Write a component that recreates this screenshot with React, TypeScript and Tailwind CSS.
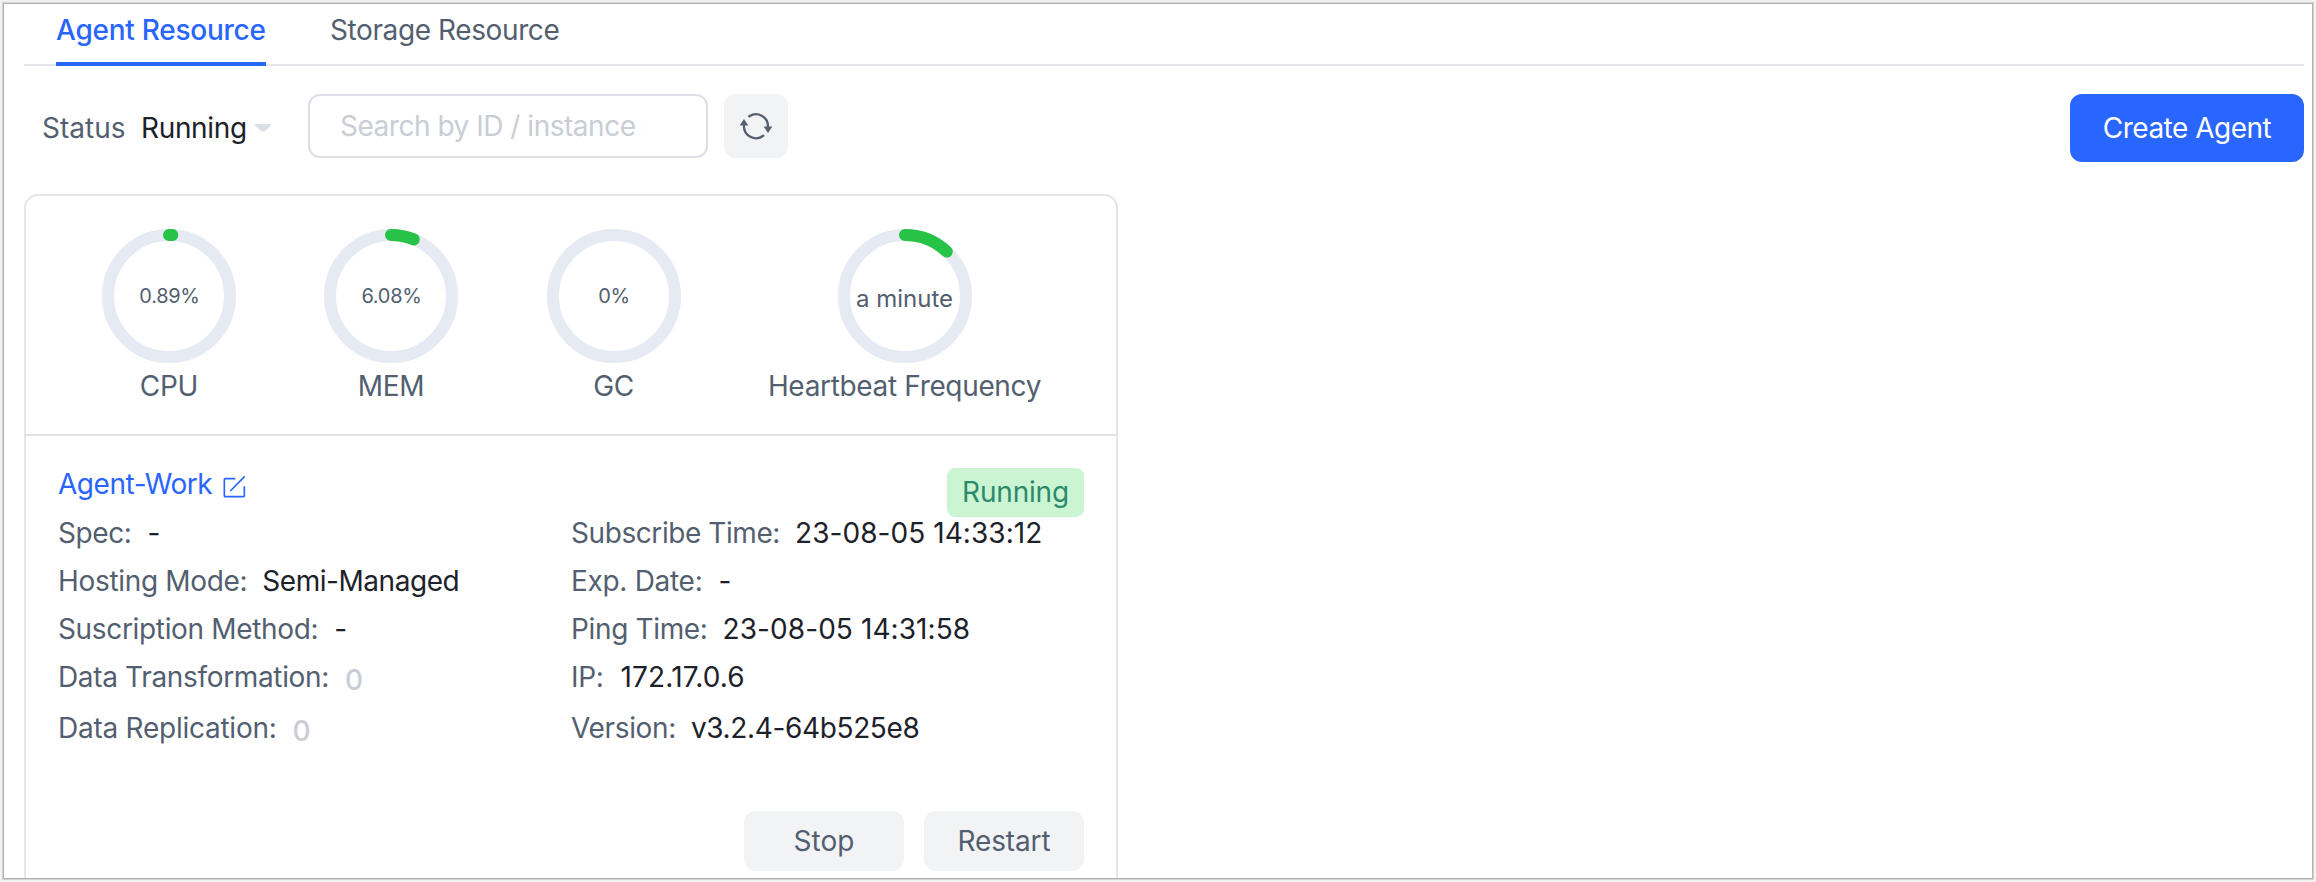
type Gauge = { label: string; value: string; percent: number; valueClass: string; labelClass: string }

const gauges: Gauge[] = [
  { label: 'CPU', value: '0.89%', percent: 0.89, valueClass: 'text-[20px] tracking-[-0.3px] pl-px', labelClass: 'tracking-[-0.3px]' },
  { label: 'MEM', value: '6.08%', percent: 6.08, valueClass: 'text-[20px] tracking-[-0.3px] pl-px', labelClass: 'tracking-[-0.3px]' },
  { label: 'GC', value: '0%', percent: 0, valueClass: 'text-[20px] tracking-[-0.3px] pl-px', labelClass: 'tracking-[-0.3px]' },
  { label: 'Heartbeat Frequency', value: 'a minute', percent: 12, valueClass: 'text-[24px] pt-1.5', labelClass: 'tracking-[-0.34px]' },
]

type Field = { label: string; value: string; labelClass: string; valueClass: string; muted?: boolean }

const leftFields: Field[] = [
  { label: 'Spec:', value: '-', labelClass: 'tracking-[-0.4px]', valueClass: 'pl-px' },
  { label: 'Hosting Mode:', value: 'Semi-Managed', labelClass: 'tracking-[-0.33px]', valueClass: 'tracking-[-0.45px]' },
  { label: 'Suscription Method:', value: '-', labelClass: 'tracking-[-0.34px]', valueClass: 'pl-px' },
  { label: 'Data Transformation:', value: '0', labelClass: 'tracking-[-0.34px]', valueClass: 'pl-px', muted: true },
  { label: 'Data Replication:', value: '0', labelClass: 'tracking-[-0.25px]', valueClass: 'pl-px', muted: true },
]

const rightFields: Field[] = [
  { label: 'Subscribe Time:', value: '23-08-05 14:33:12', labelClass: 'tracking-[-0.42px]', valueClass: 'tracking-[0.06px]' },
  { label: 'Exp. Date:', value: '-', labelClass: 'tracking-[-0.3px]', valueClass: 'pl-px' },
  { label: 'Ping Time:', value: '23-08-05 14:31:58', labelClass: 'tracking-[-0.35px]', valueClass: 'tracking-[0.08px]' },
  { label: 'IP:', value: '172.17.0.6', labelClass: 'tracking-[-0.3px]', valueClass: 'pl-[2px] tracking-[0.15px]' },
  { label: 'Version:', value: 'v3.2.4-64b525e8', labelClass: 'tracking-[-0.35px]', valueClass: 'tracking-[-0.36px]' },
]

const CIRCUMFERENCE = 2 * Math.PI * 61

function Ring({ gauge }: { gauge: Gauge }) {
  return (
    <div className="flex flex-col items-center">
      <div className="relative size-[134px]">
        <svg viewBox="0 0 134 134" className="size-full" fill="none" strokeWidth="12">
          <circle cx="67" cy="67" r="61" stroke="#e5eaf3" />
          {gauge.percent > 0 && (
            <circle
              cx="67"
              cy="67"
              r="61"
              stroke="#27c346"
              strokeLinecap="round"
              strokeDasharray={`${(CIRCUMFERENCE * gauge.percent) / 100} ${CIRCUMFERENCE}`}
              transform="rotate(-90 67 67)"
            />
          )}
        </svg>
        <span className={`absolute inset-0 flex items-center justify-center whitespace-nowrap ${gauge.valueClass}`}>{gauge.value}</span>
      </div>
      <span className={`leading-[46px] ${gauge.labelClass}`}>{gauge.label}</span>
    </div>
  )
}

function FieldList({ fields }: { fields: Field[] }) {
  return (
    <dl className="flex flex-col">
      {fields.map((f) => (
        <div key={f.label} className="flex h-12 gap-[15px] leading-[48px] last:mt-[3px]">
          <dt className={f.labelClass}>{f.label}</dt>
          <dd className={`${f.muted ? 'pt-[3px] font-medium text-[#c9cdd4]' : 'text-[#1d2129]'} ${f.valueClass}`}>{f.value}</dd>
        </div>
      ))}
    </dl>
  )
}

function RefreshIcon() {
  return (
    <svg viewBox="0 0 96 96" className="size-8" fill="none">
      <path d="M28 19A36 36 0 0 1 84 49M12 46A36 36 0 0 0 70 77" stroke="#535f70" strokeWidth="7" strokeLinecap="round" />
      <path d="M72 50h24L84 68zM0 46h24L12 28z" fill="#535f70" stroke="#535f70" strokeWidth="1" strokeLinejoin="round" />
    </svg>
  )
}

function EditIcon() {
  return (
    <svg viewBox="0 0 72 72" className="size-6" fill="none" stroke="#2965ff" strokeWidth="5">
      <path d="M37 11H7q-3 0-3 3v48q0 3 3 3h54q3 0 3-3V34M22 48L65 4" />
    </svg>
  )
}

export default function App() {
  return (
    <div className="h-[882px] w-[2316px] overflow-hidden bg-[#f2f2f2] p-1 font-[Inter,sans-serif] text-[28px] text-[#535f70]">
      <main className="h-[874px] overflow-hidden bg-white pl-5 pr-2 shadow-[0_0_0_1px_#b2b2b2,0_0_0_2px_#d4d4d4]">
        <nav className="flex h-[62px] gap-[64px] border-b-2 border-[#e5e6eb] pl-8 leading-[52px]">
          <a className="-mb-[2px] h-[62px] w-[210px] whitespace-nowrap border-b-4 border-[#2965ff] font-medium tracking-[-0.25px] text-[#2965ff]">Agent Resource</a>
          <a className="tracking-[-0.4px]">Storage Resource</a>
        </nav>

        <div className="mt-7 flex h-[68px] items-start">
          <div className="flex w-[284px] items-center pl-[18px] leading-[68px]">
            <span className="w-[99px]">Status</span>
            <span className="w-[114px] tracking-[-0.35px] text-[#1d2129]">Running</span>
            <svg viewBox="0 0 16 8" className="h-2 w-4">
              <path d="M1.5 0h13q1.5 0 1.5 1.2 0 .8-1 1.5L10 7q-2 1.6-4 0L1 2.7Q0 2 0 1.2 0 0 1.500 0z" fill="#dcdfe6" />
            </svg>
          </div>
          <input
            className="h-16 w-[400px] rounded-xl border-2 border-[#dcdfe6] pl-[30px] pr-[61px] tracking-[-0.48px] outline-none placeholder:text-[#c9cdd4]"
            placeholder="Search by ID / instance name"
          />
          <button className="ml-4 flex size-16 items-center justify-center rounded-xl bg-[#f2f3f5]">
            <RefreshIcon />
          </button>
          <button className="ml-auto h-[68px] w-[234px] rounded-xl bg-[#2965ff] tracking-[-0.5px] text-white">Create Agent</button>
        </div>

        <section className="mt-8 h-[720px] w-[1094px] rounded-[14px] border-2 border-[#e5e6eb]">
          <div className="grid h-[240px] grid-cols-[222px_222px_223px_359px] border-b-2 border-[#dfe3e8] pl-8 pt-[33px]">
            {gauges.map((g) => (
              <Ring key={g.label} gauge={g} />
            ))}
          </div>
          <div className="px-8 pt-6">
            <div className="flex h-[49px] items-start justify-between">
              <div className="flex leading-[48px] text-[#2965ff]">
                <span className="tracking-[-0.45px]">Agent-Work</span>
                <span className="ml-[11px] mt-[15px]">
                  <EditIcon />
                </span>
              </div>
              <span className="mt-2 h-[49px] w-[137px] rounded-lg bg-[#cbf5d2] text-center leading-[49px] tracking-[-0.2px] text-[#2b8a6b]">Running</span>
            </div>
            <div className="grid grid-cols-[513px_1fr]">
              <FieldList fields={leftFields} />
              <FieldList fields={rightFields} />
            </div>
            <div className="mt-[59px] flex justify-end gap-5">
              <button className="h-[60px] w-40 rounded-xl bg-[#f2f3f5]">Stop</button>
              <button className="h-[60px] w-40 rounded-xl bg-[#f2f3f5] tracking-[-0.15px]">Restart</button>
            </div>
          </div>
        </section>
      </main>
    </div>
  )
}
